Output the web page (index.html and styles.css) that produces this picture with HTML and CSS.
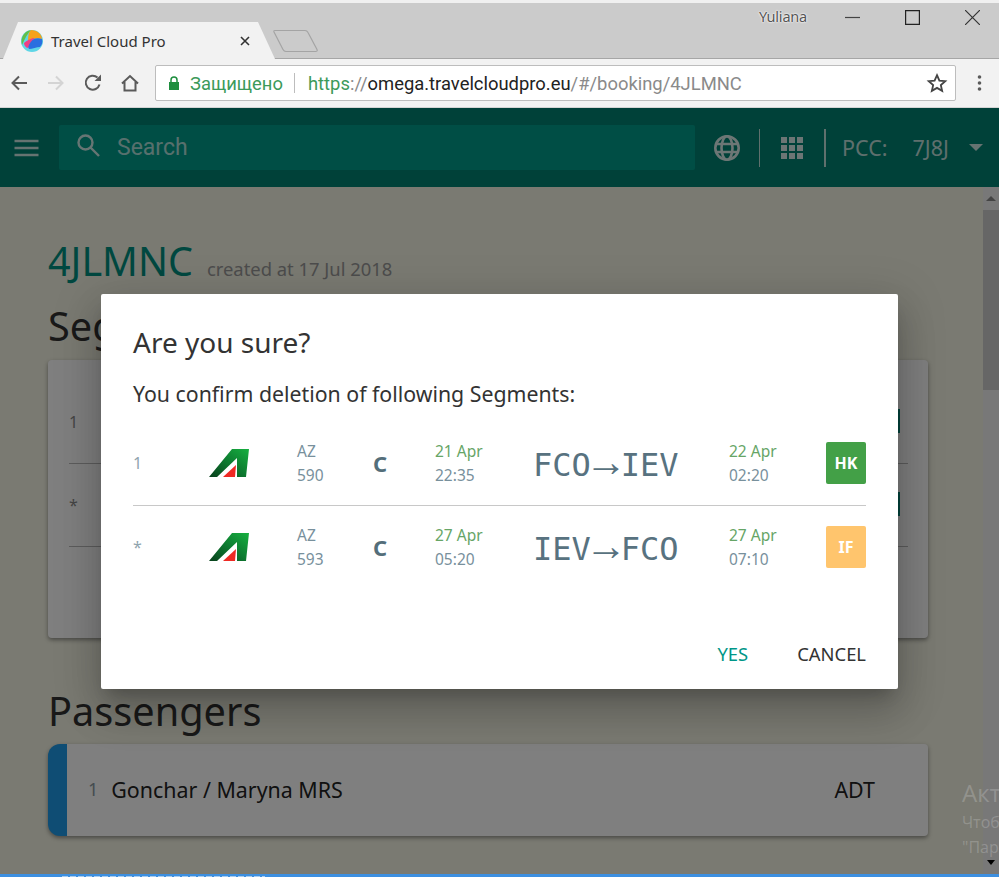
FILE: index.html
```html
<!DOCTYPE html>
<html lang="en">
<head>
    <title>Travel Cloud Pro</title>
    <link rel="stylesheet" href="styles.css">
</head>
<body>
<div class="window">
    <div class="tabstrip">
        <div class="tab">
            <svg class="favicon" viewBox="0 0 22 22">
                <circle cx="11" cy="11" r="11" fill="#5fd6e6"/>
                <path d="M1 15C-1 7 4 1 10 0c-3 3-6 8-9 15z" fill="#63c04a"/>
                <path d="M10 0c6 0 11 4 11 9-5-2-10 0-14 4 0-5 0-10 3-13z" fill="#f5a21c"/>
                <path d="M21 9c1 3 0 6-2 8-3 0-8 2-11 2-1-2-2-4-1-6 4-4 9-6 14-4z" fill="#2a6fe0"/>
                <path d="M3 13c3-3 8-5 11-5-3 2-6 5-7 10-2 0-4-3-4-5z" fill="#ee3f86"/>
            </svg>
            <span class="tab-title">Travel Cloud Pro</span>
            <svg class="tab-close" viewBox="0 0 10 10"><path d="M1 1l8 8M9 1L1 9" stroke="#333" stroke-width="1.6"/></svg>
        </div>
        <svg class="new-tab" viewBox="0 0 46 24"><path d="M2 1.500h30q2 0 3 2l9 17q.8 2-1.500 2H13q-2 0-3-2L1 3q-.6-1.500 1-1.500z" fill="#cbcbcb" stroke="#a4a4a4" stroke-width="1.200"/></svg>
        <span class="os-user">Yuliana</span>
        <div class="os-buttons">
            <svg viewBox="0 0 15 15"><path d="M0 7.500h15" stroke="#444" stroke-width="1.200"/></svg>
            <svg viewBox="0 0 15 15"><path d="M.6.600h13.800v13.800H.6z" fill="none" stroke="#222" stroke-width="1.200"/></svg>
            <svg viewBox="0 0 15 15"><path d="M0 0l15 15M15 0L0 15" stroke="#333" stroke-width="1.200"/></svg>
        </div>
    </div>
    <div class="toolbar">
        <svg class="nav-icon" viewBox="0 0 18 18"><path d="M17 9H3M9 2.500L2.500 9 9 15.500" fill="none" stroke="#5a5a5a" stroke-width="2"/></svg>
        <svg class="nav-icon" viewBox="0 0 18 18"><path d="M1 9h14M9 2.500L15.500 9 9 15.500" fill="none" stroke="#d4d4d4" stroke-width="2"/></svg>
        <svg class="nav-icon" viewBox="0 0 18 18"><path d="M15.500 10.500A7 7 0 1 1 13.500 3.500" fill="none" stroke="#5a5a5a" stroke-width="2"/><path d="M10.500 7H17V.500z" fill="#5a5a5a"/></svg>
        <svg class="nav-icon" viewBox="0 0 18 18"><path d="M1 9.500L9 2l8 7.500M3.500 8v8.500h11V8" fill="none" stroke="#5a5a5a" stroke-width="2"/></svg>
        <div class="omnibox">
            <svg class="lock" viewBox="0 0 12 14"><path d="M3 6V4a3 3 0 0 1 6 0v2" fill="none" stroke="#1e8e3e" stroke-width="1.500"/><path d="M1 6h10v8H1z" fill="#1e8e3e"/></svg>
            <span class="secure">Защищено</span>
            <span class="omni-sep"></span>
            <span class="url"><span class="url-scheme">https</span>://<span class="url-host">omega.travelcloudpro.eu</span>/#/booking/4JLMNC</span>
            <svg class="star" viewBox="0 0 24 24"><path d="M12 3.500l2.600 5.900 6.400.6-4.800 4.300 1.400 6.300L12 17.300l-5.600 3.300 1.400-6.300L3 10l6.400-.6z" fill="none" stroke="#444" stroke-width="2"/></svg>
        </div>
        <svg class="menu-dots" viewBox="0 0 4 18"><circle cx="2" cy="3" r="1.800"/><circle cx="2" cy="9" r="1.800"/><circle cx="2" cy="15" r="1.800"/></svg>
    </div>

    <div class="app">
        <div class="appbar">
            <svg class="hamburger" viewBox="0 0 24 18"><path d="M0 2h24M0 9h24M0 16h24" stroke="#fff" stroke-width="2.400"/></svg>
            <div class="search">
                <svg class="search-icon" viewBox="0 0 24 24"><circle cx="9.500" cy="9.500" r="7" fill="none" stroke="#fff" stroke-width="2.400"/><path d="M14.500 14.500L23 23" stroke="#fff" stroke-width="2.400"/></svg>
                <span>Search</span>
            </div>
            <svg class="globe" viewBox="0 0 26 26"><g fill="none" stroke="#fff" stroke-width="2.600"><circle cx="13" cy="13" r="11.700"/><ellipse cx="13" cy="13" rx="5.500" ry="11.700"/><path d="M2 9h22M2 17h22"/></g></svg>
            <span class="bar-sep"></span>
            <div class="apps-grid">
                <i></i><i></i><i></i><i></i><i></i><i></i><i></i><i></i><i></i>
            </div>
            <span class="bar-sep bar-sep-strong"></span>
            <span class="pcc-label">PCC:</span>
            <span class="pcc-value">7J8J</span>
            <span class="pcc-caret"></span>
        </div>

        <div class="page">
            <div class="content">
                <div class="booking-head">
                    <span class="booking-code">4JLMNC</span>
                    <span class="booking-date">created at 17 Jul 2018</span>
                </div>
                <h2 class="section-title">Segments</h2>
                <div class="card segments-card">
                    <div class="seg-row"><span>1</span><span class="seg-chip"></span></div>
                    <div class="seg-row"><span>*</span><span class="seg-chip"></span></div>
                </div>
                <h2 class="section-title passengers-title">Passengers</h2>
                <div class="card passenger-card">
                    <span class="pax-num">1</span>
                    <span class="pax-name">Gonchar / Maryna MRS</span>
                    <span class="pax-type">ADT</span>
                </div>
            </div>
            <div class="scrollbar">
                <div class="scroll-arrow-up"></div>
                <div class="scroll-thumb"></div>
                <div class="scroll-arrow-down"></div>
            </div>
        </div>

        <div class="scrim"></div>

        <div class="dialog">
            <div class="dialog-title">Are you sure?</div>
            <div class="dialog-text">You confirm deletion of following Segments:</div>
            <div class="dialog-row">
                <span class="col-num">1</span>
                <svg class="airline" viewBox="0 0 40 30"><defs><linearGradient id="az" x1="0" y1="1" x2="1" y2="0"><stop offset="0" stop-color="#08401c"/><stop offset="0.5" stop-color="#0d7a30"/><stop offset="1" stop-color="#17b040"/></linearGradient></defs><path d="M0 29L23 1h17l-3 28h-9V10L8 29z" fill="url(#az)"/><path d="M14 29l13-12-1 12z" fill="#ee2a24"/></svg>
                <span class="col-flight">AZ<br>590</span>
                <span class="col-class">C</span>
                <span class="col-date"><span class="date">21 Apr</span><br>22:35</span>
                <span class="col-route">FCO<span class="arrow">→</span>IEV</span>
                <span class="col-date col-arrive"><span class="date">22 Apr</span><br>02:20</span>
                <span class="status status-hk">HK</span>
            </div>
            <div class="dialog-row">
                <span class="col-num">*</span>
                <svg class="airline" viewBox="0 0 40 30"><path d="M0 29L23 1h17l-3 28h-9V10L8 29z" fill="url(#az)"/><path d="M14 29l13-12-1 12z" fill="#ee2a24"/></svg>
                <span class="col-flight">AZ<br>593</span>
                <span class="col-class">C</span>
                <span class="col-date"><span class="date">27 Apr</span><br>05:20</span>
                <span class="col-route">IEV<span class="arrow">→</span>FCO</span>
                <span class="col-date col-arrive"><span class="date">27 Apr</span><br>07:10</span>
                <span class="status status-if">IF</span>
            </div>
            <div class="dialog-actions">
                <span class="btn-yes">YES</span>
                <span class="btn-cancel">CANCEL</span>
            </div>
        </div>

        <div class="watermark">
            <div class="wm-title">Активация Windows</div>
            <div class="wm-text">Чтобы активировать Windows, перейдите в раздел</div>
            <div class="wm-text">"Параметры".</div>
        </div>
    </div>
    <div class="taskbar"><span class="taskbar-text"></span></div>
</div>
</body>
</html>
```

FILE: styles.css
```css
html, body {
    margin: 0;
    height: 100%;
    overflow: hidden;
}

body {
    font-family: "Noto Sans", "Open Sans", sans-serif;
    background: #7b7c70;
}

.window {
    display: flex;
    flex-direction: column;
    height: 877px;
    box-sizing: border-box;
    border-top: 3px solid #f0f0f0;
}

/* browser chrome */
.tabstrip {
    display: flex;
    align-items: flex-end;
    height: 56px;
    flex-shrink: 0;
    box-sizing: border-box;
    background: #cbcbcb;
    border-bottom: 1px solid #a6a6a6;
    position: relative;
}

.tab {
    display: flex;
    align-items: center;
    width: 272px;
    height: 37px;
    margin-left: 3px;
    margin-bottom: -1px;
    padding-left: 18px;
    box-sizing: border-box;
    background: #f2f2f2;
    clip-path: polygon(0 100%, 15px 0, 255px 0, 100% 100%);
}

.favicon {
    width: 22px;
    height: 22px;
    flex-shrink: 0;
}

.tab-title {
    margin-left: 8px;
    font-size: 15px;
    color: #333;
    flex: 1;
}

.tab-close {
    width: 10px;
    height: 10px;
    margin-right: 25px;
}

.new-tab {
    width: 46px;
    height: 24px;
    margin-left: -2px;
    margin-bottom: 5px;
}

.os-user {
    position: absolute;
    top: 3px;
    left: 759px;
    font-size: 14.500px;
    letter-spacing: -0.2px;
    color: #555;
    text-shadow: 0 0 2px #fff, 0 0 2px #fff;
}

.os-buttons {
    position: absolute;
    top: 7px;
    right: 19px;
    display: flex;
    gap: 45px;
}

.os-buttons svg {
    width: 15px;
    height: 15px;
}

.toolbar {
    display: flex;
    align-items: center;
    height: 49px;
    flex-shrink: 0;
    box-sizing: border-box;
    padding-left: 10px;
    background: #f2f2f2;
    border-bottom: 1px solid #d4d4d4;
}

.nav-icon {
    width: 18px;
    height: 18px;
    margin-right: 19px;
}

.omnibox {
    display: flex;
    align-items: center;
    width: 801px;
    height: 36px;
    margin-left: -3px;
    padding-left: 12px;
    box-sizing: border-box;
    background: #fff;
    border: 1px solid #bdbdbd;
    border-radius: 2px;
    font-family: "Roboto", sans-serif;
    font-size: 18.400px;
    color: #8a8a8a;
}

.lock {
    width: 12px;
    height: 14px;
}

.secure {
    margin-left: 10px;
    color: #3c9a5a;
}

.omni-sep {
    width: 1px;
    height: 20px;
    margin: 0 13px 0 11px;
    background: #bdbdbd;
}

.url {
    flex: 1;
}

.url-scheme {
    color: #3c9a5a;
}

.url-host {
    color: #222;
}

.star {
    width: 22px;
    height: 22px;
    margin-right: 7px;
}

.menu-dots {
    width: 5px;
    height: 18px;
    margin-left: 21px;
    fill: #5a5a5a;
}

/* app */
.app {
    position: relative;
    flex: 1;
    display: flex;
    flex-direction: column;
    min-height: 0;
}

.appbar {
    display: flex;
    align-items: center;
    height: 79px;
    flex-shrink: 0;
    padding-left: 14px;
    box-sizing: border-box;
    background: #008272;
    color: #fff;
}

.hamburger {
    width: 25px;
    height: 18px;
    opacity: 0.8;
}

.search {
    display: flex;
    align-items: center;
    width: 636px;
    height: 45px;
    margin-left: 20px;
    padding-left: 17px;
    box-sizing: border-box;
    background: #009c8b;
    border-radius: 2px;
    font-family: "Roboto", sans-serif;
    font-size: 23px;
    color: rgba(255, 255, 255, 0.7);
}

.search-icon {
    width: 24px;
    height: 24px;
    margin-right: 17px;
    margin-top: -5px;
    opacity: 0.8;
}

.globe {
    width: 26px;
    height: 26px;
    margin-left: 19px;
    opacity: 0.85;
}

.bar-sep {
    width: 1px;
    height: 38px;
    margin-left: 19px;
    background: rgba(255, 255, 255, 0.75);
}

.bar-sep-strong {
    width: 2px;
    margin-left: 21px;
}

.apps-grid {
    display: grid;
    grid-template-columns: repeat(3, 6px);
    grid-auto-rows: 6px;
    gap: 2px;
    margin-left: 21px;
}

.apps-grid i {
    background: #fff;
    opacity: 0.85;
}

.pcc-label, .pcc-value {
    font-size: 21.500px;
    color: rgba(255, 255, 255, 0.75);
}

.pcc-label {
    margin-left: 16px;
}

.pcc-value {
    margin-left: 25px;
}

.pcc-caret {
    margin-left: 20px;
    border-left: 7px solid transparent;
    border-right: 7px solid transparent;
    border-top: 7px solid rgba(255, 255, 255, 0.8);
}

.page {
    flex: 1;
    display: flex;
    min-height: 0;
    background: #f4f4e4;
    overflow: hidden;
}

.content {
    flex: 1;
    padding: 46px 55px 0 48px;
    min-width: 0;
}

.booking-head {
    display: flex;
    align-items: baseline;
    gap: 14px;
}

.booking-code {
    font-size: 39.500px;
    line-height: 56px;
    color: #009080;
}

.booking-date {
    font-size: 18.400px;
    color: #999;
}

.section-title {
    margin: 12px 0 0;
    font-size: 39.700px;
    font-weight: 400;
    line-height: 50px;
    color: #333;
}

.card {
    background: #fff;
    border-radius: 4px;
    box-shadow: 0 2px 4px rgba(0, 0, 0, 0.4);
}

.segments-card {
    height: 278px;
    margin-top: 9px;
    padding: 21px 20px 0 21px;
    box-sizing: border-box;
}

.seg-row {
    display: flex;
    justify-content: space-between;
    height: 83px;
    box-sizing: border-box;
    padding-top: 31px;
    padding-right: 8px;
    font-size: 16px;
    line-height: 20px;
    color: #8a8a8a;
    border-bottom: 1px solid #bbb;
}

.seg-chip {
    width: 40px;
    height: 24px;
    margin-top: -3px;
    background: #00897b;
}

.passengers-title {
    margin-top: 48px;
}

.passenger-card {
    display: flex;
    align-items: center;
    height: 90px;
    padding-bottom: 2px;
    margin-top: 8px;
    border-left: 19px solid #1f9ae8;
    border-radius: 12px 4px 4px 12px;
    font-size: 21.400px;
    color: #222;
}

.pax-num {
    margin-left: 21px;
    font-size: 18px;
    color: #8a98a0;
}

.pax-name {
    margin-left: 13px;
    flex: 1;
}

.pax-type {
    margin-right: 53px;
}

.scrollbar {
    position: relative;
    width: 16px;
    flex-shrink: 0;
    background: #f0f0f0;
}

.scroll-thumb {
    height: 180px;
    margin-top: 23px;
    background: #cdcdcd;
}

.scroll-arrow-down {
    position: absolute;
    bottom: 9px;
    left: 4px;
    border-left: 4px solid transparent;
    border-right: 4px solid transparent;
    border-top: 5px solid #000;
}

.scroll-arrow-up {
    position: absolute;
    top: 9px;
    left: 3px;
    border-left: 5px solid transparent;
    border-right: 5px solid transparent;
    border-bottom: 5px solid #888;
}

.scrim {
    position: absolute;
    inset: 0;
    background: rgba(0, 0, 0, 0.5);
}

/* dialog */
.dialog {
    position: absolute;
    top: 186px;
    left: 101px;
    width: 797px;
    height: 395px;
    padding: 28px 32px 0;
    box-sizing: border-box;
    background: #fff;
    border-radius: 2px;
    box-shadow: 0 11px 15px -7px rgba(0, 0, 0, 0.2), 0 24px 38px 3px rgba(0, 0, 0, 0.14), 0 9px 46px 8px rgba(0, 0, 0, 0.12);
}

.dialog-title {
    font-size: 28px;
    line-height: 40px;
    color: #333;
}

.dialog-text {
    margin-top: 18px;
    font-size: 21.300px;
    line-height: 28px;
    color: #333;
}

.dialog-row {
    display: flex;
    align-items: center;
    height: 81px;
    box-sizing: border-box;
    font-size: 15.500px;
    line-height: 24px;
    color: #78909c;
}

.dialog-text + .dialog-row {
    height: 85px;
    margin-top: 13px;
    border-bottom: 1px solid #c8c8c8;
}

.col-num {
    width: 76px;
    font-size: 16px;
    color: #90a4ae;
}

.airline {
    width: 40px;
    height: 30px;
    margin-right: 48px;
}

.col-flight {
    width: 76px;
}

.col-class {
    width: 62px;
    font-size: 22px;
    font-weight: 700;
    color: #546e7a;
}

.col-date {
    width: 98px;
}

.date {
    color: #66a566;
}

.col-route {
    width: 196px;
    font-family: "DejaVu Sans Mono", monospace;
    font-size: 32px;
    line-height: 40px;
    color: #587280;
}

.arrow {
    font-family: "Liberation Serif", serif;
    font-size: 42px;
    line-height: 1;
    margin: 0 -6px;
}

.col-arrive {
    width: 97px;
}

.status {
    width: 40px;
    height: 42px;
    line-height: 42px;
    text-align: center;
    border-radius: 2px;
    font-size: 16px;
    font-weight: 700;
    color: #fff;
}

.status-hk {
    background: #43a047;
}

.status-if {
    background: #ffc56d;
}

.dialog-actions {
    display: flex;
    justify-content: flex-end;
    gap: 49px;
    margin-top: 55px;
    font-size: 18.400px;
    line-height: 24px;
}

.btn-yes {
    color: #009688;
}

.btn-cancel {
    color: #333;
}

.watermark {
    position: absolute;
    top: 668px;
    left: 962px;
    white-space: nowrap;
    color: rgba(255, 255, 255, 0.2);
    font-family: "Open Sans", sans-serif;
}

.wm-title {
    font-size: 24px;
    line-height: 34px;
}

.wm-text {
    font-size: 16px;
    line-height: 25px;
}

.taskbar {
    height: 3px;
    flex-shrink: 0;
    position: relative;
    background: #3d8fe0;
}

.taskbar-text {
    position: absolute;
    left: 62px;
    bottom: 0;
    width: 203px;
    height: 1px;
    background: repeating-linear-gradient(90deg, #a9cdf0 0 6px, #3d8fe0 6px 8px);
}
```
